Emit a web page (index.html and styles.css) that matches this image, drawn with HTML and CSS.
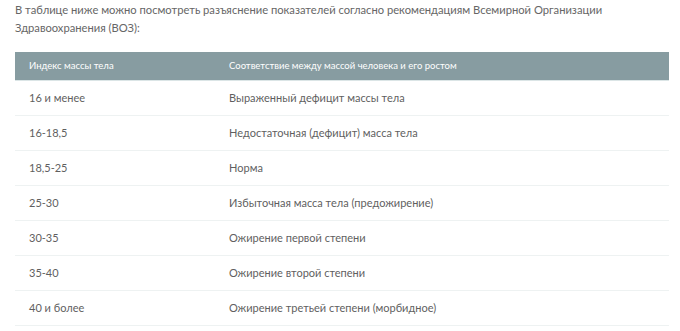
FILE: index.html
```html
<!DOCTYPE html>
<html lang="ru">
<head>
<meta charset="utf-8">
<link rel="stylesheet" href="styles.css">
</head>
<body>
<div class="page">
  <p class="intro">В таблице ниже можно посмотреть разъяснение показателей согласно рекомендациям Всемирной Организации Здравоохранения (ВОЗ):</p>
  <table class="bmi">
    <thead>
      <tr><th class="c1">Индекс массы тела</th><th>Соответствие между массой человека и его ростом</th></tr>
    </thead>
    <tbody>
      <tr><td class="c1">16 и менее</td><td>Выраженный дефицит массы тела</td></tr>
      <tr><td class="c1">16-18,5</td><td>Недостаточная (дефицит) масса тела</td></tr>
      <tr><td class="c1">18,5-25</td><td>Норма</td></tr>
      <tr><td class="c1">25-30</td><td>Избыточная масса тела (предожирение)</td></tr>
      <tr><td class="c1">30-35</td><td>Ожирение первой степени</td></tr>
      <tr><td class="c1">35-40</td><td>Ожирение второй степени</td></tr>
      <tr><td class="c1">40 и более</td><td>Ожирение третьей степени (морбидное)</td></tr>
    </tbody>
  </table>
</div>
</body>
</html>
```
FILE: styles.css
```css
html, body { margin: 0; padding: 0; background: #fff; }
body { font-family: Lato, "Noto Sans", sans-serif; color: #5f5f5f; }
.page { padding: 0 11px 0 15px; }
.intro { margin: 0 0 15px; font-size: 11.2px; line-height: 18px; padding-top: 1px; color: #666; max-width: 600px; }
.bmi { width: 654px; border-collapse: collapse; }
.bmi th { background: #879ca1; color: #fff; font-weight: normal; font-size: 9.5px; text-align: left; height: 28px; padding: 0 14px; box-sizing: border-box; border-bottom: 1px solid #dbe5e6; }
.bmi td { font-size: 11px; height: 35px; padding: 0 14px; border-bottom: 1px solid #eef2f2; box-sizing: border-box; }
.bmi .c1 { width: 200px; }
```
